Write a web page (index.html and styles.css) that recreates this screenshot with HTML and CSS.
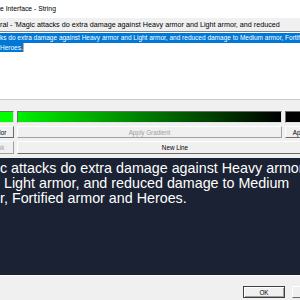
FILE: index.html
```html
<!DOCTYPE html>
<html lang="en">
<head>
<meta charset="UTF-8">
<meta name="viewport" content="width=device-width, initial-scale=1.0">
<title>Interface - String</title>
<link rel="stylesheet" href="styles.css">
</head>
<body>
<div class="title"><span class="cut">Edit Value - Engin</span>e Interface - String</div>
<div class="caption"><span class="cut">Text - Gene</span>ral - 'Magic attacks do extra damage against Heavy armor and Light armor, and reduced</div>

<div class="edit">
    <div class="line"><span class="sel"><span class="cut">Magic attac</span>ks do extra damage against Heavy armor and Light armor, and reduced damage to Medium armor, Fortified armor and </span></div>
    <div class="line"><span class="sel last">Heroes.</span></div>
</div>

<div class="tools">
    <div class="swatch start"></div>
    <div class="gradient"></div>
    <div class="swatch end"></div>

    <button class="btn">Apply Color</button>
    <button class="btn" disabled>Apply Gradient</button>
    <button class="btn">Apply Color</button>

    <button class="btn" disabled>Insert Link</button>
    <button class="btn wide">New Line</button>
</div>

<div class="preview">
    <div class="row"><span class="cut">Magi</span>c attacks do extra damage against Heavy armor</div>
    <div class="row"><span class="cut">and</span> Light armor, and reduced damage to Medium</div>
    <div class="row"><span class="cut">armo</span>r, Fortified armor and Heroes.</div>
</div>

<div class="footer">
    <button class="btn ok">OK</button>
    <button class="btn">Cancel</button>
</div>
</body>
</html>
```

FILE: styles.css
```css
body {
    margin: 0;
    width: 300px;
    height: 300px;
    overflow: hidden;
    background-color: #f0f0f0;
    font-family: "Liberation Sans", Arial, sans-serif;
    font-size: 6.3px;
    color: #000;
}

/* text that runs off the left edge of the window */
.cut {
    display: inline-flex;
    justify-content: flex-end;
    width: 0;
    white-space: pre;
}

.title {
    height: 18px;
    line-height: 17px;
    background-color: #fff;
    font-size: 6.8px;
    white-space: nowrap;
}

.caption {
    height: 13px;
    line-height: 13px;
    font-size: 7.2px;
    white-space: nowrap;
}

.edit {
    height: 66px;
    padding-top: 1px;
    background-color: #fff;
    border-top: 1px solid #828790;
    border-bottom: 1px solid #c8c8c8;
    font-size: 6.5px;
    white-space: nowrap;
}

.line {
    height: 9.5px;
    line-height: 9.5px;
}

.sel {
    display: inline-block;
    height: 9.5px;
    background-color: #0078d7;
    color: #fff;
}

.sel.last {
    border-right: 1px solid #f0a060;
}

.tools {
    display: grid;
    grid-template-columns: 48px 265px 48px;
    grid-template-rows: 12px 12px 13px;
    gap: 3px;
    width: 367px;
    margin: 11px 0 0 -34px;
}

.swatch, .gradient {
    box-sizing: border-box;
    border: 1px solid;
    border-color: #6d6d6d #e3e3e3 #e3e3e3 #6d6d6d;
}

.swatch.start {
    background-color: #00ff00;
}

.swatch.end {
    background-color: #000;
}

.gradient {
    background: linear-gradient(to right, #00f000, #000);
}

.btn {
    box-sizing: border-box;
    margin: 0;
    padding: 0;
    font-family: inherit;
    font-size: 6.3px;
    color: #000;
    background-color: #f0f0f0;
    border: 1px solid;
    border-color: #fff #696969 #696969 #fff;
    white-space: nowrap;
}

.btn:disabled {
    color: #a0a0a0;
    border-color: #fff #a0a0a0 #a0a0a0 #fff;
}

.btn.wide {
    grid-column: 2 / 4;
}

.preview {
    height: 117px;
    margin-top: 4px;
    padding-top: 3px;
    box-sizing: border-box;
    background-color: #1b2233;
    color: #fff;
    font-size: 14.3px;
    line-height: 15px;
    white-space: nowrap;
}

.footer {
    display: flex;
    justify-content: flex-end;
    gap: 7px;
    margin-right: -34px;
    padding-top: 10px;
    border-top: 1px solid #fff;
}

.footer .btn {
    width: 42px;
    height: 12px;
}

.btn.ok {
    border: 1px solid #404040;
    box-shadow: inset 1px 1px 0 #fff, inset -1px -1px 0 #a0a0a0;
}
```
